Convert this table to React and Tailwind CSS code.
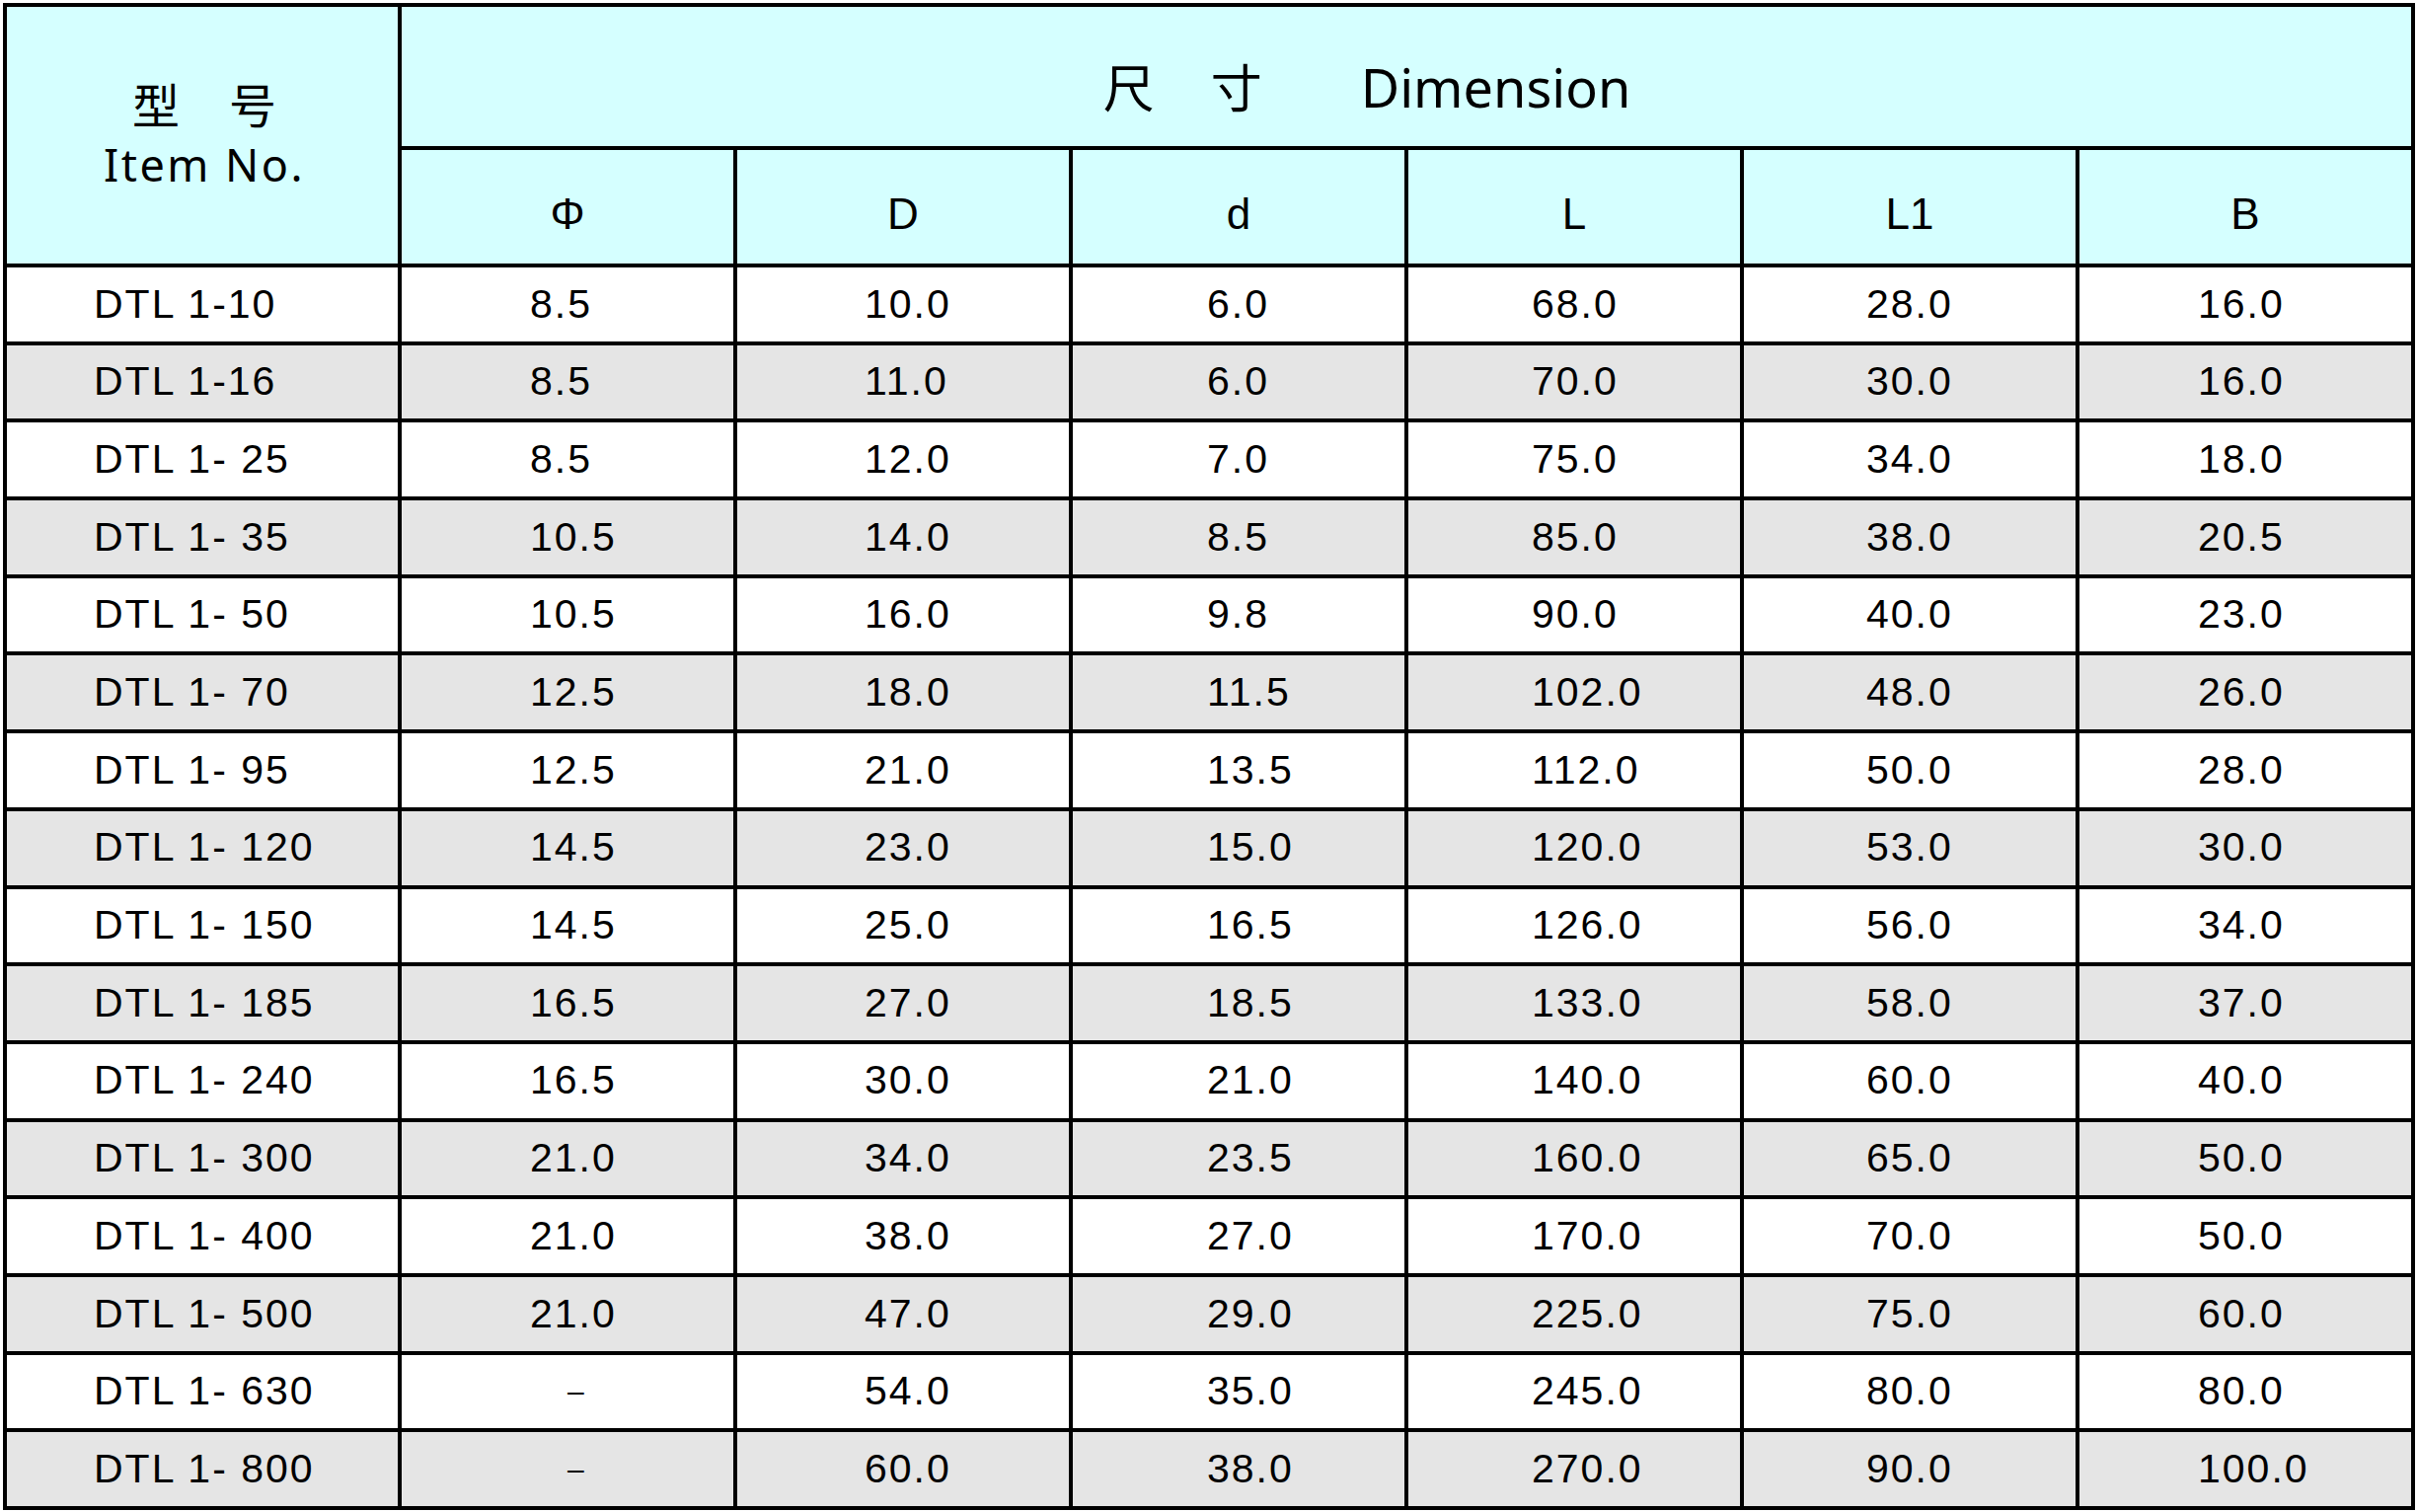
const rows = [
  ['DTL 1-10', '8.5', '10.0', '6.0', '68.0', '28.0', '16.0'],
  ['DTL 1-16', '8.5', '11.0', '6.0', '70.0', '30.0', '16.0'],
  ['DTL 1- 25', '8.5', '12.0', '7.0', '75.0', '34.0', '18.0'],
  ['DTL 1- 35', '10.5', '14.0', '8.5', '85.0', '38.0', '20.5'],
  ['DTL 1- 50', '10.5', '16.0', '9.8', '90.0', '40.0', '23.0'],
  ['DTL 1- 70', '12.5', '18.0', '11.5', '102.0', '48.0', '26.0'],
  ['DTL 1- 95', '12.5', '21.0', '13.5', '112.0', '50.0', '28.0'],
  ['DTL 1- 120', '14.5', '23.0', '15.0', '120.0', '53.0', '30.0'],
  ['DTL 1- 150', '14.5', '25.0', '16.5', '126.0', '56.0', '34.0'],
  ['DTL 1- 185', '16.5', '27.0', '18.5', '133.0', '58.0', '37.0'],
  ['DTL 1- 240', '16.5', '30.0', '21.0', '140.0', '60.0', '40.0'],
  ['DTL 1- 300', '21.0', '34.0', '23.5', '160.0', '65.0', '50.0'],
  ['DTL 1- 400', '21.0', '38.0', '27.0', '170.0', '70.0', '50.0'],
  ['DTL 1- 500', '21.0', '47.0', '29.0', '225.0', '75.0', '60.0'],
  ['DTL 1- 630', '–', '54.0', '35.0', '245.0', '80.0', '80.0'],
  ['DTL 1- 800', '–', '60.0', '38.0', '270.0', '90.0', '100.0'],
];

const subHeads = ['Φ', 'D', 'd', 'L', 'L1', 'B'];

// left offsets of the numbers inside each dimension column
const pads = ['pl-[130px]', 'pl-[129px]', 'pl-[136px]', 'pl-[125px]', 'pl-[124px]', 'pl-[120px]'];

const sans = "font-[family-name:'Noto_Sans','Noto_Sans_CJK_SC',sans-serif]";
const arial = "font-[family-name:'Liberation_Sans',Arial,sans-serif]";

export default function App() {
  return (
    <div className="bg-white min-h-screen pt-[3px] pl-[3px]">
      <div className="inline-grid grid-cols-[396px_repeat(6,336px)] grid-rows-[141px_115px_repeat(16,74.7px)] gap-[4px] p-[4px] bg-black text-black">
        {/* Header */}
        <div className={`row-span-2 bg-[#d5ffff] flex flex-col items-center justify-center pl-[4px] ${sans}`}>
          <div className="flex gap-[50px] text-[48px] leading-[56px] mt-[2px]">
            <span>型</span>
            <span>号</span>
          </div>
          <div className="text-[45px] leading-[60px] tracking-[2.5px] mt-[2px]">Item No.</div>
        </div>
        <div className={`col-span-6 bg-[#d5ffff] flex items-center justify-center pt-[22px] pr-[80px] ${sans}`}>
          <span className="text-[52px] mr-[57px]">尺</span>
          <span className="text-[52px] mr-[100px]">寸</span>
          <span className="text-[54px]">Dimension</span>
        </div>
        {subHeads.map((h) => (
          <div key={h} className={`bg-[#d5ffff] flex items-center justify-center pt-[14px] text-[44px] ${arial}`}>
            {h}
          </div>
        ))}

        {/* Body */}
        {rows.map((r, i) => {
          const bg = i % 2 === 0 ? 'bg-white' : 'bg-[#e5e5e5]';
          return [
            <div key={`${i}-n`} className={`${bg} flex items-center pl-[88px] text-[41px] tracking-[2px] ${arial}`}>
              {r[0]}
            </div>,
            ...r.slice(1).map((v, j) => (
              <div key={`${i}-${j}`} className={`${bg} flex items-center ${pads[j]} text-[41px] tracking-[2px] ${arial}`}>
                {v === '–' ? <span className="ml-[38px] text-[30px]">–</span> : v}
              </div>
            )),
          ];
        })}
      </div>
    </div>
  );
}
